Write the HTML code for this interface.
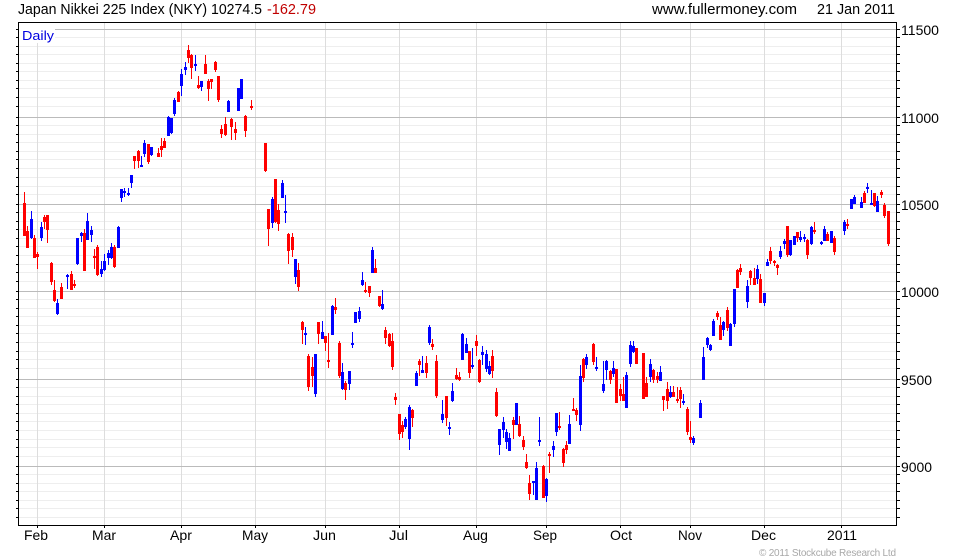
<!DOCTYPE html>
<html><head><meta charset="utf-8"><title>Japan Nikkei 225 Index</title>
<style>
html,body{margin:0;padding:0;background:#fff;width:980px;height:560px;overflow:hidden}
svg{display:block}
text{font-family:"Liberation Sans",Arial,sans-serif;fill:#000}
.g{shape-rendering:crispEdges;fill:none}
</style></head><body>
<svg width="980" height="560" viewBox="0 0 980 560" xmlns="http://www.w3.org/2000/svg">
<rect width="980" height="560" fill="#fff"/>
<path class="g" stroke="#eee" d="M19 37.5H896M19 46.5H896M19 54.5H896M19 63.5H896M19 71.5H896M19 80.5H896M19 88.5H896M19 97.5H896M19 106.5H896M19 125.5H896M19 134.5H896M19 142.5H896M19 151.5H896M19 159.5H896M19 168.5H896M19 177.5H896M19 186.5H896M19 194.5H896M19 212.5H896M19 221.5H896M19 229.5H896M19 238.5H896M19 246.5H896M19 255.5H896M19 264.5H896M19 272.5H896M19 281.5H896M19 299.5H896M19 308.5H896M19 316.5H896M19 325.5H896M19 333.5H896M19 342.5H896M19 351.5H896M19 359.5H896M19 368.5H896M19 387.5H896M19 396.5H896M19 404.5H896M19 413.5H896M19 421.5H896M19 430.5H896M19 439.5H896M19 447.5H896M19 456.5H896M19 474.5H896M19 483.5H896M19 491.5H896M19 500.5H896M19 508.5H896M19 517.5H896"/>
<path class="g" stroke="#ddd" d="M37.5 23V525M104.5 23V525M181.5 23V525M255.5 23V525M325.5 23V525M399.5 23V525M476.5 23V525M546.5 23V525M620.5 23V525M690.5 23V525M764.5 23V525M841.5 23V525"/>
<path class="g" stroke="#bbb" d="M19 29.5H896M19 117.5H896M19 204.5H896M19 291.5H896M19 379.5H896M19 466.5H896"/>
<rect x="19" y="23" width="36" height="20" fill="#fff"/>
<!-- red wicks -->
<path class="g" stroke="#f00" d="M24.5 192V236M27.5 226V248M34.5 235V258M37.5 252V269M44.5 215V229M47.5 215V243M51.5 262V285M54.5 280V302M61.5 283V299M71.5 271V290M74.5 280V288M84.5 229V271M94.5 249V269M97.5 245V276M114.5 245V268M134.5 156V169M138.5 150V168M148.5 144V164M158.5 148V157M161.5 138V157M164.5 138V148M178.5 91V102M188.5 45V63M191.5 54V79M198.5 76V89M205.5 55V74M208.5 79V101M211.5 79V89M215.5 61V72M218.5 76V102M221.5 125V138M225.5 117V136M231.5 118V140M235.5 122V140M245.5 115V137M251.5 100V110M265.5 143V172M268.5 209V246M275.5 179V223M278.5 204V231M288.5 233V264M292.5 233V257M298.5 263V291M302.5 321V344M308.5 354V391M312.5 357V387M318.5 322V344M325.5 336V351M328.5 333V368M335.5 298V314M339.5 341V378M345.5 381V400M365.5 282V293M369.5 286V297M375.5 259V273M379.5 296V307M385.5 327V344M389.5 333V347M392.5 333V370M395.5 393V405M399.5 414V440M402.5 421V438M412.5 409V427M419.5 359V376M426.5 356V378M432.5 339V350M436.5 355V398M446.5 396V426M456.5 368V380M459.5 372V381M469.5 351V378M476.5 335V356M479.5 359V383M492.5 350V378M496.5 388V417M513.5 417V439M519.5 416V437M523.5 436V450M526.5 454V469M529.5 475V500M543.5 465V498M549.5 452V473M559.5 412V430M563.5 448V467M566.5 441V454M573.5 398V411M576.5 408V421M583.5 358V382M593.5 343V365M610.5 370V384M616.5 369V403M620.5 384V401M623.5 377V401M636.5 348V364M643.5 353V399M646.5 377V397M653.5 369V383M657.5 372V383M663.5 396V411M667.5 382V409M673.5 386V397M677.5 387V403M680.5 387V408M687.5 407V435M690.5 421V443M717.5 311V320M720.5 317V340M727.5 307V331M737.5 269V288M740.5 264V275M750.5 270V285M754.5 268V285M760.5 274V303M770.5 247V264M774.5 260V266M777.5 264V275M787.5 226V257M797.5 232V242M807.5 239V259M814.5 222V234M827.5 232V241M834.5 236V255M847.5 219V229M864.5 191V203M874.5 193V207M881.5 190V198M884.5 203V218M888.5 211V246"/>
<!-- red bodies -->
<path class="g" stroke="#f00" stroke-width="3" d="M24.5 203V236M27.5 231V248M34.5 238V258M37.5 254V257M44.5 217V222M47.5 215V230M51.5 263V282M54.5 290V301M61.5 287V299M71.5 274V290M74.5 284V286M84.5 233V271M94.5 256V258M97.5 247V275M114.5 247V267M134.5 156V161M138.5 151V161M148.5 144V162M158.5 153V157M161.5 146V150M164.5 141V148M178.5 92V102M188.5 50V58M191.5 55V68M198.5 85V88M205.5 64V74M208.5 81V89M211.5 79V82M215.5 62V70M218.5 76V100M221.5 129V134M225.5 124V135M231.5 119V127M235.5 129V133M245.5 116V131M251.5 106V108M265.5 143V171M268.5 209V229M275.5 179V222M278.5 210V224M288.5 234V251M292.5 237V250M298.5 270V287M302.5 322V330M308.5 356V387M312.5 367V376M318.5 322V334M325.5 336V343M328.5 360V362M335.5 307V310M339.5 343V376M345.5 383V390M365.5 290V292M369.5 286V293M375.5 268V273M379.5 296V306M385.5 330V338M389.5 334V346M392.5 341V367M395.5 397V400M399.5 414V434M402.5 425V432M412.5 410V418M419.5 361V365M426.5 363V373M432.5 344V347M436.5 361V396M446.5 396V418M456.5 375V379M459.5 377V380M469.5 351V373M476.5 341V346M479.5 360V382M492.5 356V371M496.5 392V416M513.5 420V425M519.5 424V436M523.5 440V447M526.5 462V468M529.5 483V494M543.5 466V498M549.5 454V456M559.5 426V428M563.5 449V463M566.5 445V450M573.5 409V411M576.5 410V415M583.5 359V378M593.5 344V362M610.5 371V380M616.5 369V403M620.5 389V396M623.5 394V401M636.5 348V364M643.5 353V399M646.5 383V397M653.5 370V380M657.5 376V380M663.5 396V400M667.5 389V401M673.5 392V397M677.5 399V401M680.5 390V399M687.5 409V432M690.5 437V440M717.5 313V317M720.5 325V340M727.5 310V328M737.5 270V288M740.5 268V272M750.5 271V278M754.5 278V285M760.5 279V303M770.5 251V261M774.5 261V263M777.5 265V268M787.5 226V255M797.5 232V238M807.5 240V255M814.5 230V232M827.5 234V241M834.5 238V252M847.5 224V226M864.5 193V203M874.5 193V206M881.5 192V195M884.5 205V216M888.5 211V244"/>
<!-- blue wicks -->
<path class="g" stroke="#00f" d="M31.5 211V239M41.5 222V241M57.5 299V315M67.5 274V289M77.5 238V265M81.5 232V242M87.5 213V240M91.5 226V242M101.5 261V277M104.5 254V271M108.5 250V265M111.5 243V259M118.5 226V248M121.5 189V202M124.5 188V197M128.5 188V196M131.5 175V188M141.5 156V167M144.5 140V157M151.5 147V156M168.5 116V136M171.5 118V134M174.5 98V116M181.5 69V96M185.5 62V75M195.5 55V71M201.5 81V91M228.5 100V112M238.5 88V111M241.5 79V99M272.5 197V228M282.5 180V198M285.5 195V223M295.5 259V284M305.5 327V345M315.5 354V397M322.5 321V339M332.5 305V335M342.5 363V390M349.5 371V390M352.5 332V348M355.5 312V323M359.5 307V322M362.5 272V286M372.5 247V273M382.5 290V310M405.5 417V429M409.5 405V450M416.5 371V386M422.5 356V373M429.5 325V345M442.5 400V423M449.5 422V435M452.5 383V402M462.5 333V360M466.5 338V353M472.5 348V369M482.5 346V365M486.5 350V372M489.5 361V375M499.5 429V455M503.5 417V438M506.5 429V449M509.5 433V451M516.5 403V425M533.5 481V495M536.5 462V500M539.5 417V446M546.5 478V502M553.5 441V457M556.5 413V436M569.5 415V444M580.5 365V431M586.5 354V369M596.5 357V371M603.5 361V393M606.5 360V380M613.5 361V377M626.5 372V408M630.5 341V367M633.5 341V353M650.5 359V382M660.5 366V381M670.5 386V398M683.5 394V405M693.5 436V445M700.5 400V418M703.5 347V380M707.5 337V348M710.5 344V351M713.5 319V336M723.5 321V336M730.5 323V346M734.5 289V327M747.5 280V308M757.5 265V284M764.5 293V306M767.5 259V266M780.5 246V259M784.5 239V249M790.5 240V256M794.5 236V245M800.5 231V242M804.5 234V242M811.5 226V245M821.5 241V245M824.5 226V241M831.5 231V243M844.5 220V235M851.5 199V209M854.5 195V204M861.5 197V208M867.5 183V193M871.5 190V205M877.5 196V212"/>
<!-- blue bodies -->
<path class="g" stroke="#00f" stroke-width="3" d="M31.5 219V238M41.5 227V238M57.5 303V314M67.5 275V277M77.5 238V264M81.5 233V236M87.5 221V240M91.5 230V235M101.5 269V274M104.5 261V270M108.5 253V258M111.5 247V258M118.5 227V248M121.5 189V198M124.5 191V193M128.5 193V195M131.5 175V183M141.5 165V167M144.5 143V154M151.5 147V155M168.5 117V136M171.5 118V133M174.5 100V114M181.5 74V86M185.5 67V70M195.5 64V66M201.5 81V87M228.5 101V112M238.5 88V111M241.5 79V99M272.5 199V223M282.5 183V198M285.5 211V213M295.5 259V277M305.5 333V335M315.5 354V394M322.5 332V339M332.5 306V335M342.5 372V389M349.5 371V384M352.5 343V345M355.5 312V323M359.5 311V319M362.5 280V285M372.5 250V273M382.5 304V309M405.5 419V427M409.5 407V439M416.5 373V386M422.5 370V373M429.5 327V343M442.5 414V420M449.5 427V429M452.5 391V401M462.5 334V360M466.5 344V353M472.5 365V367M482.5 352V355M486.5 354V369M489.5 366V374M499.5 429V445M503.5 422V430M506.5 432V442M509.5 438V451M516.5 403V425M533.5 481V483M536.5 468V500M539.5 440V442M546.5 479V496M553.5 446V450M556.5 413V432M569.5 424V444M580.5 376V425M586.5 357V365M596.5 367V369M603.5 384V391M606.5 361V370M613.5 368V374M626.5 375V408M630.5 345V364M633.5 346V352M650.5 364V377M660.5 372V381M670.5 392V397M683.5 401V403M693.5 438V443M700.5 403V418M703.5 357V380M707.5 338V345M710.5 345V350M713.5 321V336M723.5 322V330M730.5 324V346M734.5 289V324M747.5 286V302M757.5 269V279M764.5 293V303M767.5 262V266M780.5 251V257M784.5 241V244M790.5 240V255M794.5 236V245M800.5 237V240M804.5 237V239M811.5 227V244M821.5 242V244M824.5 229V241M831.5 231V243M844.5 222V231M851.5 199V209M854.5 197V204M861.5 202V208M867.5 187V189M871.5 203V205M877.5 201V212"/>
<!-- frame and ticks -->
<path class="g" stroke="#000" d="M18.5 22.5H896.5V525.5H18.5Z"/>
<path class="g" stroke="#000" d="M16 29.5H18M16 37.5H18M16 46.5H18M16 54.5H18M16 63.5H18M16 71.5H18M16 80.5H18M16 88.5H18M16 97.5H18M16 106.5H18M16 117.5H18M16 125.5H18M16 134.5H18M16 142.5H18M16 151.5H18M16 159.5H18M16 168.5H18M16 177.5H18M16 186.5H18M16 194.5H18M16 204.5H18M16 212.5H18M16 221.5H18M16 229.5H18M16 238.5H18M16 246.5H18M16 255.5H18M16 264.5H18M16 272.5H18M16 281.5H18M16 291.5H18M16 299.5H18M16 308.5H18M16 316.5H18M16 325.5H18M16 333.5H18M16 342.5H18M16 351.5H18M16 359.5H18M16 368.5H18M16 379.5H18M16 387.5H18M16 396.5H18M16 404.5H18M16 413.5H18M16 421.5H18M16 430.5H18M16 439.5H18M16 447.5H18M16 456.5H18M16 466.5H18M16 474.5H18M16 483.5H18M16 491.5H18M16 500.5H18M16 508.5H18M16 517.5H18"/>
<path class="g" stroke="#000" d="M897 29.5H900M897 37.5H900M897 46.5H900M897 54.5H900M897 63.5H900M897 71.5H900M897 80.5H900M897 88.5H900M897 97.5H900M897 106.5H900M897 117.5H900M897 125.5H900M897 134.5H900M897 142.5H900M897 151.5H900M897 159.5H900M897 168.5H900M897 177.5H900M897 186.5H900M897 194.5H900M897 204.5H900M897 212.5H900M897 221.5H900M897 229.5H900M897 238.5H900M897 246.5H900M897 255.5H900M897 264.5H900M897 272.5H900M897 281.5H900M897 291.5H900M897 299.5H900M897 308.5H900M897 316.5H900M897 325.5H900M897 333.5H900M897 342.5H900M897 351.5H900M897 359.5H900M897 368.5H900M897 379.5H900M897 387.5H900M897 396.5H900M897 404.5H900M897 413.5H900M897 421.5H900M897 430.5H900M897 439.5H900M897 447.5H900M897 456.5H900M897 466.5H900M897 474.5H900M897 483.5H900M897 491.5H900M897 500.5H900M897 508.5H900M897 517.5H900"/>
<path class="g" stroke="#000" d="M37.5 526V528M104.5 526V528M181.5 526V528M255.5 526V528M325.5 526V528M399.5 526V528M476.5 526V528M546.5 526V528M620.5 526V528M690.5 526V528M764.5 526V528M841.5 526V528"/>
<!-- text -->
<text x="18" y="14" font-size="14.5" textLength="244" lengthAdjust="spacingAndGlyphs">Japan Nikkei 225 Index (NKY) 10274.5</text>
<text x="267" y="14" font-size="14.5" textLength="49" lengthAdjust="spacingAndGlyphs" style="fill:#c00000">-162.79</text>
<text x="652" y="14" font-size="14.5" textLength="145" lengthAdjust="spacingAndGlyphs">www.fullermoney.com</text>
<text x="817" y="14" font-size="14.5" textLength="78" lengthAdjust="spacingAndGlyphs">21 Jan 2011</text>
<text x="22" y="40" font-size="13" textLength="32" lengthAdjust="spacingAndGlyphs" style="fill:#0000e0">Daily</text>
<text x="901" y="35" font-size="14" textLength="38" lengthAdjust="spacingAndGlyphs">11500</text>
<text x="901" y="123" font-size="14" textLength="38" lengthAdjust="spacingAndGlyphs">11000</text>
<text x="901" y="210" font-size="14" textLength="38" lengthAdjust="spacingAndGlyphs">10500</text>
<text x="901" y="297" font-size="14" textLength="38" lengthAdjust="spacingAndGlyphs">10000</text>
<text x="901" y="385" font-size="14" textLength="31" lengthAdjust="spacingAndGlyphs">9500</text>
<text x="901" y="472" font-size="14" textLength="31" lengthAdjust="spacingAndGlyphs">9000</text>
<text x="24" y="540" font-size="14" textLength="24" lengthAdjust="spacingAndGlyphs">Feb</text>
<text x="92" y="540" font-size="14" textLength="24" lengthAdjust="spacingAndGlyphs">Mar</text>
<text x="170" y="540" font-size="14" textLength="22" lengthAdjust="spacingAndGlyphs">Apr</text>
<text x="242" y="540" font-size="14" textLength="26" lengthAdjust="spacingAndGlyphs">May</text>
<text x="313" y="540" font-size="14" textLength="23" lengthAdjust="spacingAndGlyphs">Jun</text>
<text x="389" y="540" font-size="14" textLength="19" lengthAdjust="spacingAndGlyphs">Jul</text>
<text x="463" y="540" font-size="14" textLength="25" lengthAdjust="spacingAndGlyphs">Aug</text>
<text x="533" y="540" font-size="14" textLength="24" lengthAdjust="spacingAndGlyphs">Sep</text>
<text x="610" y="540" font-size="14" textLength="22" lengthAdjust="spacingAndGlyphs">Oct</text>
<text x="678" y="540" font-size="14" textLength="24" lengthAdjust="spacingAndGlyphs">Nov</text>
<text x="751" y="540" font-size="14" textLength="25" lengthAdjust="spacingAndGlyphs">Dec</text>
<text x="827" y="540" font-size="14" textLength="30" lengthAdjust="spacingAndGlyphs">2011</text>
<text x="759" y="556" font-size="10" textLength="137" lengthAdjust="spacing" style="fill:#a8a8a8">© 2011 Stockcube Research Ltd</text>
</svg>
</body></html>
